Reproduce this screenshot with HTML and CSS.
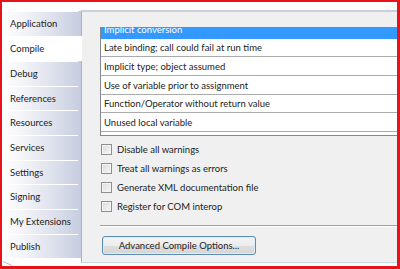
FILE: index.html
```html
<!DOCTYPE html>
<html>
<head>
<meta charset="utf-8">
<link rel="stylesheet" href="styles.css">
</head>
<body>
<div class="frame">
  <nav class="sidebar">
    <div class="tab h25">Application</div>
    <div class="tab h25 active">Compile</div>
    <div class="tab h25">Debug</div>
    <div class="tab h24">References</div>
    <div class="tab h25">Resources</div>
    <div class="tab h25">Services</div>
    <div class="tab h24">Settings</div>
    <div class="tab h25">Signing</div>
    <div class="tab h25">My Extensions</div>
    <div class="tab h24">Publish</div>
    <svg class="grip" width="10" height="5" viewBox="0 0 10 5"><path d="M0 0.5 L9 4.5" stroke="#b8bcc6" stroke-width="1" fill="none"/></svg>
  </nav>
  <main class="panel">
    <div class="list">
      <div class="row cut"><div class="cut-text">Implicit conversion</div></div>
      <div class="row h18">Late binding; call could fail at run time</div>
      <div class="row h19">Implicit type; object assumed</div>
      <div class="row h19">Use of variable prior to assignment</div>
      <div class="row h18">Function/Operator without return value</div>
      <div class="row h19">Unused local variable</div>
      <div class="row tail"></div>
    </div>
    <div class="checks">
      <div class="check"><span class="box"></span>Disable all warnings</div>
      <div class="check"><span class="box"></span>Treat all warnings as errors</div>
      <div class="check"><span class="box"></span>Generate XML documentation file</div>
      <div class="check"><span class="box"></span>Register for COM interop</div>
    </div>
    <div class="sep"></div>
    <div class="btn">Advanced Compile Options...</div>
  </main>
</div>
</body>
</html>
```
FILE: styles.css
```css
html, body {
  margin: 0;
  padding: 0;
  background: #ffffff;
}
body {
  font-family: Lato, "Open Sans", sans-serif;
  font-size: 9.5px;
  color: #222222;
}
.frame {
  width: 400px;
  height: 269px;
  box-sizing: border-box;
  border-left: 2px solid #e8121b;
  border-top: 2px solid #e8121b;
  border-right: 3px solid #e8121b;
  border-bottom: 3px solid #e8121b;
  display: flex;
  overflow: hidden;
  background: #ffffff;
}
.sidebar {
  width: 79px;
  flex: none;
  padding-top: 9px;
  display: flex;
  flex-direction: column;
}
.tab {
  box-sizing: border-box;
  padding-left: 8px;
  display: flex;
  align-items: center;
  white-space: nowrap;
  background:
    linear-gradient(#ffffff, #ffffff) no-repeat 1px 0 / 75px 1px,
    linear-gradient(to right, #ffffff 0%, #f4f5f9 25%, #dde1ec 65%, #c6cde0 100%);
}
.tab.h25 { height: 25px; }
.tab.h24 { height: 24px; }
.tab.active {
  background: #ffffff;
  margin-right: -1px;
  position: relative;
  z-index: 1;
}
.grip {
  margin-top: 3px;
  margin-left: 1px;
}
.panel {
  flex: 1;
  margin-top: 8px;
  height: 253px;
  box-sizing: border-box;
  background: #f0f0f0;
  border-top: 2px solid #c9d0dc;
  border-left: 1px solid #aab1c0;
  border-bottom: 1px solid #c6d9ea;
  padding: 15px 0 0 18px;
  overflow: hidden;
  display: flex;
  flex-direction: column;
}
.list {
  background: #ffffff;
  border-left: 1px solid #828790;
  border-bottom: 1px solid #828790;
  margin-right: -2px;
}
.row {
  box-sizing: border-box;
  padding-left: 3px;
  border-bottom: 1px solid #ababab;
  display: flex;
  align-items: center;
  white-space: nowrap;
}
.row.h18 { height: 18px; }
.row.h19 { height: 19px; }
.row.cut {
  height: 12px;
  background: #3399ff;
  color: #ffffff;
  border-bottom: none;
  overflow: hidden;
  align-items: flex-start;
}
.cut-text {
  line-height: 18px;
  margin-top: -6px;
}
.row.tail {
  height: 3px;
  border-bottom: none;
}
.checks {
  margin-top: 4px;
  display: flex;
  flex-direction: column;
}
.check {
  height: 19px;
  display: flex;
  align-items: center;
  padding-left: 1px;
  white-space: nowrap;
}
.box {
  width: 9px;
  height: 9px;
  border: 1px solid #8e8f8f;
  background: linear-gradient(135deg, #dcdcdc, #f6f6f6);
  box-shadow: inset 0 0 0 1px #f4f4f4;
  margin-right: 5px;
}
.sep {
  margin-top: 9px;
  height: 1px;
  background: #a0a0a0;
  border-bottom: 1px solid #ffffff;
}
.btn {
  margin-top: 9px;
  margin-left: 2px;
  width: 154px;
  height: 19px;
  box-sizing: border-box;
  border: 1px solid #5a8db5;
  border-radius: 3px;
  background: linear-gradient(#f4f4f4 0%, #ececec 50%, #dedede 51%, #d6d6d6 100%);
  box-shadow: inset 0 0 0 1px #dcecf8;
  display: flex;
  align-items: center;
  justify-content: center;
  white-space: nowrap;
}
```
